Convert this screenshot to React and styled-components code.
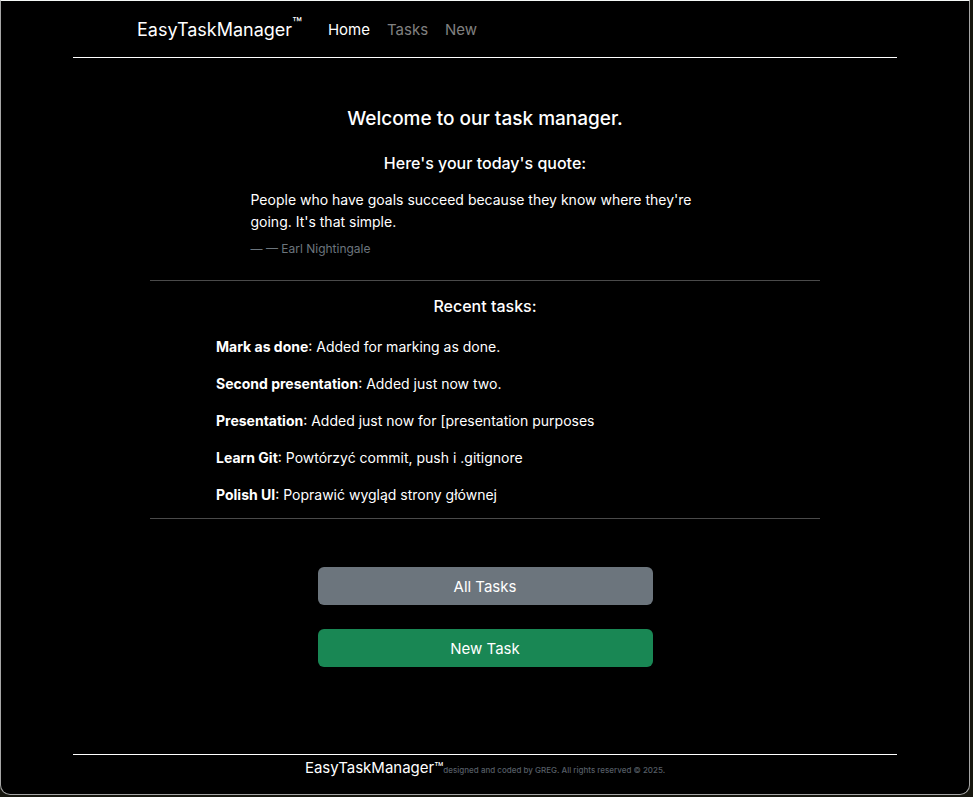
import React from "react";
import styled, { createGlobalStyle } from "styled-components";

const GlobalStyle = createGlobalStyle`
  *, *::before, *::after { box-sizing: border-box; }
  body {
    margin: 0;
    background: #17170f;
    color: #fff;
    font-family: Inter, "Noto Sans", sans-serif;
    font-size: 15px;
    line-height: 24px;
  }
  h1, h2, p, ul, figure, blockquote { margin: 0; padding: 0; }
`;

const Desktop = styled.div`
  display: flex;
  min-height: 100vh;
  padding: 0 3px 2px 0;
`;

const Window = styled.div`
  flex: 1;
  display: flex;
  flex-direction: column;
  padding: 0 72px;
  background: #000;
  border: 1px solid #a6a6a6;
  border-top-color: #f4f7f6;
  border-radius: 0 0 10px 10px;
`;

const Header = styled.header`
  display: flex;
  align-items: center;
  height: 57px;
  padding: 2px 64px 0;
  border-bottom: 1px solid #fff;
`;

const Brand = styled.a`
  margin-right: 26px;
  color: #fff;
  font-size: ${(p) => (p.$small ? "15px" : "18px")};
  text-decoration: none;
`;

const Trademark = styled.sup`
  font-size: 16px;
  line-height: 0;
`;

const Nav = styled.nav`
  display: flex;
  gap: 17px;
`;

const NavLink = styled.a`
  color: ${(p) => (p.$active ? "#fff" : "#808080")};
  text-decoration: none;
`;

const Main = styled.main`
  flex: 1;
  display: flex;
  flex-direction: column;
  padding: 49px 77px 48px;
`;

const Title = styled.h1`
  margin-bottom: 22px;
  font-size: 19px;
  font-weight: 500;
  line-height: 24px;
  text-align: center;
`;

const Subtitle = styled.h2`
  font-size: 16px;
  font-weight: 500;
  line-height: 20px;
  text-align: center;
`;

const Quote = styled.figure`
  width: 70%;
  margin: 16px auto 21px;
`;

const QuoteText = styled.blockquote`
  font-size: 14px;
  line-height: 22px;
`;

const QuoteAuthor = styled.figcaption`
  margin-top: 6px;
  color: #6c757d;
  font-size: 12px;
  line-height: 20px;
`;

const Divider = styled.hr`
  width: 100%;
  margin: 0;
  border: 0;
  border-top: 1px solid #4a4a4a;
`;

const Recent = styled.section`
  padding: 15px 0 13px;
`;

const TaskList = styled.ul`
  display: flex;
  flex-direction: column;
  gap: 16px;
  margin: 20px 66px 0;
  list-style: none;
  font-size: 14px;
  line-height: 21px;
`;

const TaskName = styled.strong`
  font-weight: 700;
`;

const Actions = styled.div`
  display: flex;
  flex-direction: column;
  gap: 24px;
  width: 50%;
  margin: 48px auto 0;
`;

const ActionButton = styled.button`
  height: 38px;
  padding: 2px 12px 0;
  border: 0;
  border-radius: 6px;
  background: ${(p) => (p.$primary ? "#198754" : "#6c757d")};
  color: #fff;
  font: inherit;
  cursor: pointer;
`;

const Footer = styled.footer`
  display: flex;
  justify-content: center;
  align-items: baseline;
  height: 40px;
  padding-top: 1px;
  border-top: 1px solid #fff;
`;

const FooterBrand = styled(Brand)`
  margin: 0;
`;

const Copyright = styled.small`
  color: #565e66;
  font-size: 8px;
  font-weight: 500;
`;

const tasks = [
  { name: "Mark as done", text: "Added for marking as done." },
  { name: "Second presentation", text: "Added just now two." },
  { name: "Presentation", text: "Added just now for [presentation purposes" },
  { name: "Learn Git", text: "Powtórzyć commit, push i .gitignore" },
  { name: "Polish UI", text: "Poprawić wygląd strony głównej" },
];

export default function App() {
  return (
    <Desktop>
      <GlobalStyle />
      <Window>
        <Header>
          <Brand href="#home">EasyTaskManager<Trademark>™</Trademark></Brand>
          <Nav>
            <NavLink href="#home" $active aria-current="page">Home</NavLink>
            <NavLink href="#tasks">Tasks</NavLink>
            <NavLink href="#new">New</NavLink>
          </Nav>
        </Header>
        <Main>
          <Title>Welcome to our task manager.</Title>
          <Subtitle>Here's your today's quote:</Subtitle>
          <Quote>
            <QuoteText>
              People who have goals succeed because they know where they're going. It's that simple.
            </QuoteText>
            <QuoteAuthor>— — Earl Nightingale</QuoteAuthor>
          </Quote>
          <Divider />
          <Recent>
            <Subtitle>Recent tasks:</Subtitle>
            <TaskList>
              {tasks.map((task) => (
                <li key={task.name}>
                  <TaskName>{task.name}</TaskName>: {task.text}
                </li>
              ))}
            </TaskList>
          </Recent>
          <Divider />
          <Actions>
            <ActionButton type="button">All Tasks</ActionButton>
            <ActionButton type="button" $primary>New Task</ActionButton>
          </Actions>
        </Main>
        <Footer>
          <FooterBrand href="#home" $small>EasyTaskManager™</FooterBrand>
          <Copyright>designed and coded by GREG. All rights reserved © 2025.</Copyright>
        </Footer>
      </Window>
    </Desktop>
  );
}
